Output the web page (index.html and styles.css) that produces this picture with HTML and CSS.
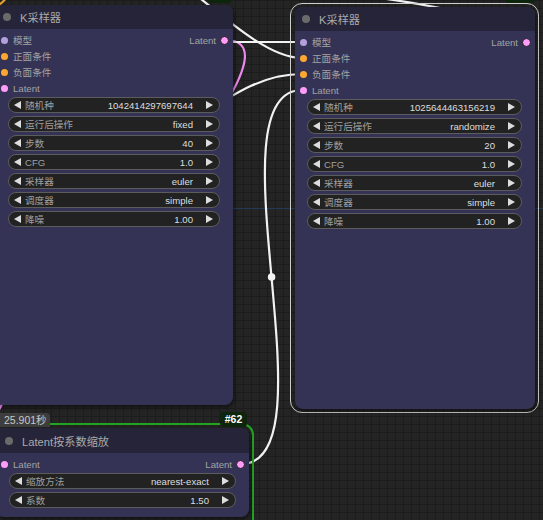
FILE: index.html
```html
<!DOCTYPE html>
<html lang="zh">
<head>
<meta charset="utf-8">
<link rel="stylesheet" href="styles.css">
</head>
<body>
<div class="canvas">
  <div class="guide"></div>
  <svg class="links" width="543" height="520" viewBox="0 0 543 520">
    <path class="wire pink" d="M225 40 C344 40 -114 464 5 464"/>
    <path class="wire" d="M120 42 L302 42"/>
    <path class="wire" d="M100 -60 C158 -60 244 58 302 58"/>
    <path class="wire" d="M160 140 C215 110 250 74 302 74"/>
    <path class="wire" d="M241 464 C336 464 207 90 302 90"/>
    <path class="wire" d="M370 -3 C400 0 420 4 450 10"/>
    <path class="wire orange" d="M-4 7 C1 4 4 1 7 -3"/>
    <circle class="mid" cx="271.6" cy="277" r="3.8"/>
  </svg>

  <div class="idbadge top-left"></div>
  <div class="idbadge top-right">#63</div>

  <div class="node n1">
    <div class="title"><span class="tdot"></span>K采样器</div>
    <div class="slots">
      <div class="row"><span class="in"><i class="dot lav"></i>模型</span><span class="out">Latent<i class="dot pink ring"></i></span></div>
      <div class="row"><span class="in"><i class="dot org"></i>正面条件</span></div>
      <div class="row"><span class="in"><i class="dot org"></i>负面条件</span></div>
      <div class="row"><span class="in"><i class="dot pink"></i>Latent</span></div>
    </div>
    <div class="widgets">
      <div class="widget"><span class="arr l"></span><span class="wl">随机种</span><span class="wv">1042414297697644</span><span class="arr r"></span></div>
      <div class="widget"><span class="arr l"></span><span class="wl">运行后操作</span><span class="wv">fixed</span><span class="arr r"></span></div>
      <div class="widget"><span class="arr l"></span><span class="wl">步数</span><span class="wv">40</span><span class="arr r"></span></div>
      <div class="widget"><span class="arr l"></span><span class="wl">CFG</span><span class="wv">1.0</span><span class="arr r"></span></div>
      <div class="widget"><span class="arr l"></span><span class="wl">采样器</span><span class="wv">euler</span><span class="arr r"></span></div>
      <div class="widget"><span class="arr l"></span><span class="wl">调度器</span><span class="wv">simple</span><span class="arr r"></span></div>
      <div class="widget"><span class="arr l"></span><span class="wl">降噪</span><span class="wv">1.00</span><span class="arr r"></span></div>
    </div>
  </div>

  <div class="select-outline"></div>
  <div class="node n2">
    <div class="title"><span class="tdot"></span>K采样器</div>
    <div class="slots">
      <div class="row"><span class="in"><i class="dot lav"></i>模型</span><span class="out">Latent<i class="dot pink ring"></i></span></div>
      <div class="row"><span class="in"><i class="dot org"></i>正面条件</span></div>
      <div class="row"><span class="in"><i class="dot org"></i>负面条件</span></div>
      <div class="row"><span class="in"><i class="dot pink"></i>Latent</span></div>
    </div>
    <div class="widgets">
      <div class="widget"><span class="arr l"></span><span class="wl">随机种</span><span class="wv">1025644463156219</span><span class="arr r"></span></div>
      <div class="widget"><span class="arr l"></span><span class="wl">运行后操作</span><span class="wv">randomize</span><span class="arr r"></span></div>
      <div class="widget"><span class="arr l"></span><span class="wl">步数</span><span class="wv">20</span><span class="arr r"></span></div>
      <div class="widget"><span class="arr l"></span><span class="wl">CFG</span><span class="wv">1.0</span><span class="arr r"></span></div>
      <div class="widget"><span class="arr l"></span><span class="wl">采样器</span><span class="wv">euler</span><span class="arr r"></span></div>
      <div class="widget"><span class="arr l"></span><span class="wl">调度器</span><span class="wv">simple</span><span class="arr r"></span></div>
      <div class="widget"><span class="arr l"></span><span class="wl">降噪</span><span class="wv">1.00</span><span class="arr r"></span></div>
    </div>
  </div>

  <div class="run-outline"></div>
  <div class="node n3">
    <div class="title"><span class="tdot"></span>Latent按系数缩放</div>
    <div class="slots">
      <div class="row"><span class="in"><i class="dot pink"></i>Latent</span><span class="out">Latent<i class="dot pink ring"></i></span></div>
    </div>
    <div class="widgets">
      <div class="widget"><span class="arr l"></span><span class="wl">缩放方法</span><span class="wv">nearest-exact</span><span class="arr r"></span></div>
      <div class="widget"><span class="arr l"></span><span class="wl">系数</span><span class="wv">1.50</span><span class="arr r"></span></div>
    </div>
  </div>
  <div class="time-badge">25.901秒</div>
  <div class="idbadge b62">#62</div>
</div>
</body>
</html>
```

FILE: styles.css
```css
* { box-sizing: border-box; }
html, body {
  margin: 0;
  padding: 0;
  background: #232323;
}
.canvas {
  position: relative;
  width: 543px;
  height: 520px;
  overflow: hidden;
  background-color: #242424;
  background-image:
    linear-gradient(#1c1c1c 1px, transparent 1px),
    linear-gradient(90deg, #1c1c1c 1px, transparent 1px);
  background-size: 8px 8px;
  background-position: 3px 0;
  font-family: "Liberation Sans", "Noto Sans CJK SC", sans-serif;
}
.guide {
  position: absolute;
  left: 0;
  top: 208px;
  width: 543px;
  height: 1px;
  background: #223a58;
}
.links {
  position: absolute;
  left: 0;
  top: 0;
}
.wire {
  fill: none;
  stroke: #f2f2f2;
  stroke-width: 2.2;
}
.wire.pink { stroke: #ee88ee; }
.wire.orange { stroke: #e8a030; }
.mid { fill: #f4f4f4; }

.node {
  position: absolute;
  background: #343355;
  border-radius: 8px;
  box-shadow: 1px 2px 4px rgba(0, 0, 0, 0.55);
  display: flex;
  flex-direction: column;
}
.n1 { left: -4px; top: 5px; width: 237px; height: 400px; }
.n2 { left: 295px; top: 7px; width: 240px; height: 402px; }
.n3 { left: -4px; top: 428px; width: 253px; height: 89px; }

.title {
  height: 24px;
  flex: none;
  background: #252439;
  border-radius: 8px 8px 0 0;
  display: flex;
  align-items: center;
  padding-left: 7px;
  color: #aaaaaa;
  font-size: 11.2px;
}
.n3 .title { height: 25px; padding-left: 9px; }
.tdot {
  width: 8px;
  height: 8px;
  border-radius: 50%;
  background: #6a6a6a;
  margin-right: 9px;
}

.slots {
  padding-top: 3px;
  display: flex;
  flex-direction: column;
}
.row {
  height: 16px;
  display: flex;
  align-items: center;
  justify-content: space-between;
  font-size: 9.6px;
  color: #a3a3a3;
}
.in {
  display: flex;
  align-items: center;
  padding-left: 5px;
}
.in .dot { margin-right: 5px; }
.out {
  display: flex;
  align-items: center;
  padding-right: 4px;
}
.out .dot { margin-left: 4px; }
.dot {
  display: inline-block;
  width: 7px;
  height: 7px;
  border-radius: 50%;
}
.dot.lav { background: #b4a0dc; }
.dot.org { background: #ffa72e; }
.dot.pink { background: #ff9cf9; }
.dot.ring {
  width: 9px;
  height: 9px;
  border: 1.5px solid #1a1a1a;
}

.widgets {
  display: flex;
  flex-direction: column;
  gap: 3px;
  padding: 1px 13px 0 12px;
}
.n3 .widgets { padding: 1px 13px 0 13px; }
.widget {
  height: 16px;
  border: 1px solid #5c5c5c;
  border-radius: 8px;
  background: #222222;
  display: flex;
  align-items: center;
  padding: 0 6px 0 5px;
  font-size: 9.6px;
}
.arr {
  width: 0;
  height: 0;
  border-top: 4px solid transparent;
  border-bottom: 4px solid transparent;
}
.arr.l { border-right: 7px solid #dddddd; }
.arr.r { border-left: 7px solid #dddddd; }
.wl {
  color: #a0a0a0;
  margin-left: 4px;
}
.wv {
  color: #dedede;
  margin-left: auto;
  margin-right: 13px;
}

.select-outline {
  position: absolute;
  left: 290px;
  top: 3px;
  width: 249px;
  height: 410px;
  border: 1.5px solid #cfcfcf;
  border-radius: 12px;
}
.run-outline {
  position: absolute;
  left: -9px;
  top: 423px;
  width: 263px;
  height: 120px;
  border: 2px solid #22a322;
  border-radius: 12px;
}
.time-badge {
  position: absolute;
  left: 0;
  top: 413px;
  width: 50px;
  height: 14px;
  background: #3d3d3d;
  border-radius: 0 4px 0 0;
  color: #c8c8c8;
  font-size: 10.5px;
  line-height: 14px;
  padding-left: 4px;
}
.idbadge {
  position: absolute;
  background: #0d240d;
  color: #ffffff;
  border-radius: 4px;
  font-size: 10.5px;
  font-weight: bold;
  line-height: 15px;
  height: 15px;
  text-align: center;
}
.b62 { left: 220px; top: 412px; width: 27px; }
.top-left { left: 208px; top: -12px; width: 24px; }
.top-right { left: 505px; top: -12px; width: 30px; }
```
